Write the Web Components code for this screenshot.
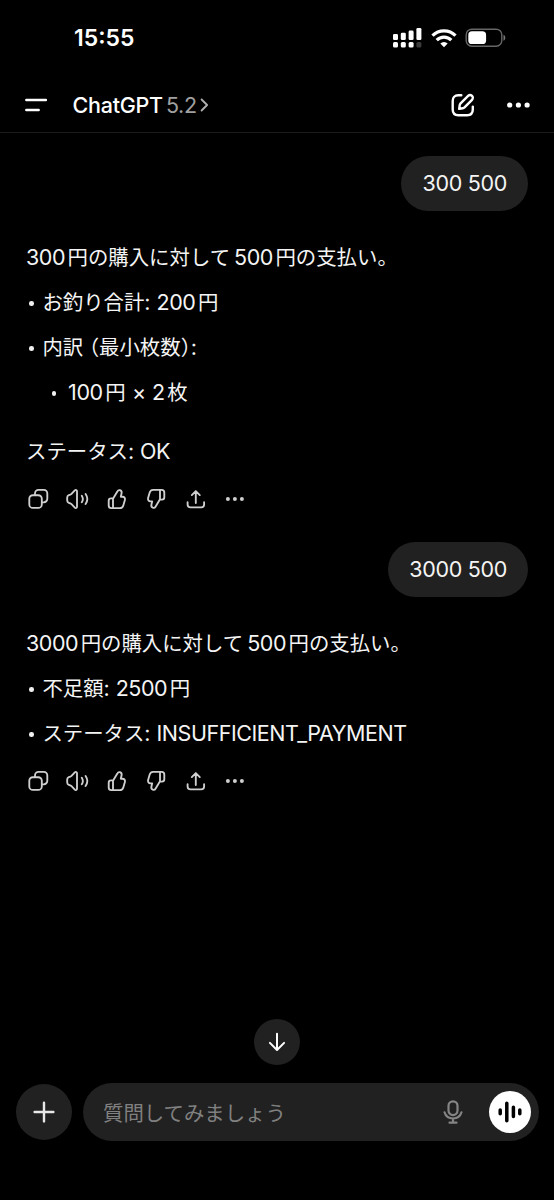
<!DOCTYPE html>
<html lang="ja">
<head>
<meta charset="utf-8">
<title>ChatGPT</title>
<style>
  html, body {
    margin: 0;
    background: #000;
  }

  body {
    height: 1200px;
    overflow: hidden;
    font-family: Inter, "Noto Sans CJK JP", sans-serif;
    color: #f4f4f4;
  }
</style>
</head>
<body>
<chat-screen>
  <status-bar slot="top" time="15:55"></status-bar>
  <nav-bar slot="top" name="ChatGPT" version="5.2"></nav-bar>

  <user-bubble>300 500</user-bubble>
  <assistant-message>
    <text-line>300円の購入に対して500円の支払い。</text-line>
    <text-line bullet>お釣り合計: 200円</text-line>
    <text-line bullet>内訳（最小枚数）:</text-line>
    <text-line bullet nested>100円 × 2枚</text-line>
    <text-line spaced>ステータス: OK</text-line>
  </assistant-message>

  <user-bubble>3000 500</user-bubble>
  <assistant-message>
    <text-line>3000円の購入に対して500円の支払い。</text-line>
    <text-line bullet>不足額: 2500円</text-line>
    <text-line bullet>ステータス: INSUFFICIENT_PAYMENT</text-line>
  </assistant-message>

  <scroll-button slot="bottom"></scroll-button>
  <chat-composer slot="bottom" placeholder="質問してみましょう"></chat-composer>
</chat-screen>

<script>
const ICONS = {
  copy: `<rect x="3.3" y="8.2" width="12.5" height="12.7" rx="3.5"/>
    <path d="M9 8V6.4a3.5 3.5 0 0 1 3.5-3.5h5.3a3.5 3.5 0 0 1 3.5 3.5v5.4a3.5 3.5 0 0 1-3.5 3.5H16"/>`,
  speaker: `<path d="M12 4.300v15.400c0 1.300-1.300 1.800-2.200.9l-3.300-3.500c-.4-.4-.8-.6-1.300-.8l-1.400-.5c-1.100-.4-1.600-1.200-1.600-2.300v-3c0-1.100.5-1.900 1.600-2.300l1.400-.5c.5-.2.900-.4 1.300-.8l3.300-3.500c.9-.9 2.200-.4 2.200.9z"/>
    <path d="M16.800 8.700c1.300 2 1.300 4.600 0 6.600M20.600 6.900c2.100 3.100 2.100 7.100 0 10.200"/>`,
  thumb: `<path d="M8 21.100V11.700l4.500-7.500c.5-.9 1.400-1.200 2.300-1 1.500.4 2.100 1.700 1.800 3l-.8 3.500h1.700c1.800 0 2.900 1.500 2.400 3.200l-1.600 5.500c-.5 1.700-1.700 2.700-3.500 2.700H6.300c-1.600 0-2.600-1-2.600-2.600v-4.700c0-1.500.9-2.400 2.400-2.400H8"/>`,
  share: `<path d="M11.800 16V4.200M7.800 8.100l4-4 4 4M3.600 15.200v2.300a2.900 2.900 0 0 0 2.900 2.900h10.700a2.900 2.900 0 0 0 2.900-2.900v-2.300"/>`,
  more: `<g fill="currentColor" stroke="none"><circle cx="4.900" cy="12" r="2"/><circle cx="11.900" cy="12" r="2"/><circle cx="18.900" cy="12" r="2"/></g>`,
};
ICONS.thumbDown = `<g transform="rotate(180 12 12)">${ICONS.thumb}</g>`;

const icon = (name) => `
  <svg width="24" height="24" viewBox="0 0 24 24" fill="none" stroke="currentColor"
    stroke-width="1.85" stroke-linecap="round" stroke-linejoin="round">${ICONS[name]}</svg>`;

class ChatScreen extends HTMLElement {
  constructor() {
    super();
    this.attachShadow({ mode: 'open' });
    this.shadowRoot.innerHTML = `
      <style>
        :host {
          display: flex;
          flex-direction: column;
          width: 554px;
          height: 1200px;
          background: #000;
        }

        main {
          flex: 1;
          min-height: 0;
          display: flex;
          flex-direction: column;
          padding: 23px 26px 0;
        }
      </style>
      <slot name="top"></slot>
      <main><slot></slot></main>
      <slot name="bottom"></slot>
    `;
  }
}

class StatusBar extends HTMLElement {
  connectedCallback() {
    this.attachShadow({ mode: 'open' });
    this.shadowRoot.innerHTML = `
      <style>
        :host {
          display: flex;
          align-items: center;
          justify-content: space-between;
          height: 76px;
          padding: 0 48px 0 74px;
          box-sizing: border-box;
          color: #fff;
        }

        .time {
          font-size: 23px;
          font-weight: 600;
        }

        .signals {
          display: flex;
          align-items: center;
          gap: 8.5px;
        }

        svg {
          display: block;
        }
      </style>
      <span class="time">${this.getAttribute('time')}</span>
      <div class="signals">
        <svg width="29" height="22" viewBox="0 0 29 22" fill="#fff">
          <rect x="0" y="7" width="5" height="6" rx="1.3"/>
          <rect x="7.8" y="5.7" width="5" height="7.3" rx="1.3"/>
          <rect x="15.6" y="3.6" width="5" height="9.4" rx="1.3"/>
          <rect x="23.4" y="1" width="5" height="12" rx="1.3"/>
          <rect x="0" y="15" width="5" height="5.6" rx="1.5"/>
          <rect x="7.8" y="15" width="5" height="5.6" rx="1.5"/>
          <rect x="15.6" y="15" width="5" height="5.6" rx="1.5"/>
          <rect x="23.4" y="15" width="5" height="5.6" rx="1.5" fill="#3c3c3c"/>
        </svg>
        <svg width="26" height="20" viewBox="0 0 26 20" fill="none" stroke="#fff" stroke-width="3.2">
          <path d="M1.5 7.700a16.200 16.200 0 0 1 23 0"/>
          <path d="M5.700 12.100a10.300 10.300 0 0 1 14.600 0"/>
          <path d="M13 19.300l-3.700-3.900a5.300 5.300 0 0 1 7.400 0z" fill="#fff" stroke="none"/>
        </svg>
        <svg width="41" height="20" viewBox="0 0 41 20">
          <rect x="1.2" y="1.2" width="35.6" height="17" rx="5.6" fill="none" stroke="#666" stroke-width="1.4"/>
          <rect x="3.3" y="3.3" width="17.8" height="12.8" rx="3.7" fill="#fff"/>
          <path d="M38.500 6.700c2.400 1 2.400 5 0 6z" fill="#777"/>
        </svg>
      </div>
    `;
  }
}

class NavBar extends HTMLElement {
  connectedCallback() {
    this.attachShadow({ mode: 'open' });
    this.shadowRoot.innerHTML = `
      <style>
        :host {
          display: flex;
          align-items: center;
          height: 57px;
          padding: 1px 24.5px 0 24.5px;
          box-sizing: border-box;
          border-bottom: 1px solid #1c1c1c;
          color: #fff;
        }

        svg {
          display: block;
        }

        .title {
          display: flex;
          align-items: center;
          flex: 1;
          margin-left: 25px;
          font-size: 21.5px;
        }

        .name {
          font-weight: 500;
          letter-spacing: -0.25px;
        }

        .version {
          margin-left: 3px;
          color: #a0a0a0;
          letter-spacing: -0.3px;
        }

        .title svg {
          margin-left: 3.5px;
        }

        .compose {
          margin-right: 32px;
        }
      </style>
      <svg width="23" height="14" viewBox="0 0 23 14" stroke="#fff" stroke-width="2.4" stroke-linecap="round">
        <path d="M1.300 2h19.600M1.300 12h12.400"/>
      </svg>
      <div class="title">
        <span class="name">${this.getAttribute('name')}</span>
        <span class="version">${this.getAttribute('version')}</span>
        <svg width="9" height="14" viewBox="0 0 9 14" fill="none" stroke="#b0b0b0" stroke-width="1.8"
          stroke-linecap="round" stroke-linejoin="round"><path d="M1.600 1.500L7.100 7l-5.500 5.500"/></svg>
      </div>
      <svg class="compose" width="24" height="24" viewBox="0 0 24 24" fill="none" stroke="#fff"
        stroke-width="2.4" stroke-linecap="round" stroke-linejoin="round">
        <path d="M10.300 2.300H7.300c-3.600 0-5.600 2-5.600 5.600v8.700c0 3.600 2 5.600 5.600 5.600h8.900c3.600 0 5.600-2 5.600-5.600v-3"/>
        <path d="M8.200 15.900l.5-3.700c.1-.7.4-1.300.9-1.800l7.500-7.500a2.700 2.700 0 0 1 3.900 3.900l-7.500 7.500c-.5.5-1.100.8-1.800.9z"/>
      </svg>
      <svg width="23" height="6" viewBox="0 0 23 6" fill="#fff">
        <circle cx="2.7" cy="3" r="2.6"/><circle cx="11.4" cy="3" r="2.6"/><circle cx="20.1" cy="3" r="2.6"/>
      </svg>
    `;
  }
}

class UserBubble extends HTMLElement {
  constructor() {
    super();
    this.attachShadow({ mode: 'open' });
    this.shadowRoot.innerHTML = `
      <style>
        :host {
          display: block;
          align-self: flex-end;
          height: 55px;
          padding: 0 21px;
          border-radius: 27.5px;
          background: #212121;
          font-size: 21.5px;
          line-height: 55px;
          letter-spacing: -0.3px;
          white-space: nowrap;
        }
      </style>
      <slot></slot>
    `;
  }
}

// One line of an answer. Latin runs are set a little larger than the kana and kanji,
// and full-width brackets lose the blank half of their box.
class TextLine extends HTMLElement {
  connectedCallback() {
    const kind = (run) => {
      if (run === '（') return 'open';
      if (run === '）') return 'close';
      if (run[0] === ':') return 'latin colon';
      return /^[\x20-\x7e×]/.test(run) ? 'latin' : 'cjk';
    };
    const runs = this.textContent
      .split(/([\x20-\x7e×]+|[（）])/)
      .filter(Boolean)
      .map((run) => `<span class="${kind(run)}">${run}</span>`)
      .join('');

    this.attachShadow({ mode: 'open' });
    this.shadowRoot.innerHTML = `
      <style>
        :host {
          display: flex;
          align-items: center;
          height: 45px;
          white-space: pre;
        }

        :host([bullet]) {
          padding-left: 3px;
        }

        :host([nested]) {
          padding-left: 25.5px;
        }

        :host([spaced]) {
          margin-top: 14px;
        }

        .dot {
          display: none;
          width: 4.6px;
          height: 4.6px;
          margin: 3px 8.8px 0 0;
          border-radius: 50%;
          background: #f0f0f0;
        }

        :host([bullet]) .dot {
          display: block;
        }

        :host([nested]) .dot {
          margin-right: 12px;
        }

        .text {
          padding-top: 2px;
          line-height: 45px;
        }

        .latin {
          font-size: 21.5px;
          letter-spacing: -0.45px;
          word-spacing: 0.8px;
        }

        .cjk, .open, .close {
          font-size: 20.4px;
        }

        .open, .close {
          font-feature-settings: "halt";
        }

        .open {
          margin-left: 5.7px;
        }

        .latin + .cjk {
          margin-left: 2.5px;
        }

        .cjk + .latin:not(.colon) {
          margin-left: 4px;
        }

        :host([nested]) .cjk + .latin {
          margin-left: 0;
        }
      </style>
      <span class="dot"></span>
      <span class="text">${runs}</span>
    `;
  }
}

class AssistantMessage extends HTMLElement {
  constructor() {
    super();
    this.attachShadow({ mode: 'open' });
    this.shadowRoot.innerHTML = `
      <style>
        :host {
          display: block;
          padding: 23.5px 0 31px;
        }

        .lines {
          display: flex;
          flex-direction: column;
        }

        .actions {
          display: flex;
          gap: 15.5px;
          margin: 13.5px 0 0 -0.5px;
          color: #cfcfcf;
        }
      </style>
      <div class="lines"><slot></slot></div>
      <div class="actions">
        ${['copy', 'speaker', 'thumb', 'thumbDown', 'share', 'more'].map(icon).join('')}
      </div>
    `;
  }
}

class ScrollButton extends HTMLElement {
  constructor() {
    super();
    this.attachShadow({ mode: 'open' });
    this.shadowRoot.innerHTML = `
      <style>
        :host {
          display: flex;
          align-items: center;
          justify-content: center;
          align-self: center;
          width: 46px;
          height: 46px;
          margin-bottom: 18px;
          border-radius: 50%;
          background: #212121;
        }
      </style>
      <svg width="20" height="20" viewBox="0 0 20 20" fill="none" stroke="#fff" stroke-width="2"
        stroke-linecap="round" stroke-linejoin="round">
        <path d="M10 1.800v16M2.900 10.900l7.100 7.100 7.100-7.100"/>
      </svg>
    `;
  }
}

class ChatComposer extends HTMLElement {
  connectedCallback() {
    this.attachShadow({ mode: 'open' });
    this.shadowRoot.innerHTML = `
      <style>
        :host {
          display: flex;
          align-items: center;
          gap: 10.5px;
          height: 58px;
          padding: 0 15.5px 59px;
        }

        .add, .voice {
          display: flex;
          align-items: center;
          justify-content: center;
          border-radius: 50%;
        }

        .add {
          width: 56.5px;
          height: 56.5px;
          background: #212121;
        }

        .field {
          flex: 1;
          display: flex;
          align-items: center;
          height: 58px;
          padding: 0 7.5px 0 20.5px;
          box-sizing: border-box;
          border-radius: 29px;
          background: #212121;
        }

        .placeholder {
          flex: 1;
          font-size: 20.4px;
          color: #808080;
        }

        .voice {
          width: 42px;
          height: 42px;
          margin-left: 26px;
          background: #fff;
        }
      </style>
      <div class="add">
        <svg width="22" height="22" viewBox="0 0 22 22" stroke="#e8e8e8" stroke-width="2.4" stroke-linecap="round">
          <path d="M11 1.600v18.800M1.600 11h18.800"/>
        </svg>
      </div>
      <div class="field">
        <span class="placeholder">${this.getAttribute('placeholder')}</span>
        <svg width="20" height="24" viewBox="0 0 20 24" fill="none" stroke="#848484" stroke-width="2.2" stroke-linecap="round">
          <rect x="5.500" y="1.300" width="9" height="13.800" rx="4.500"/>
          <path d="M1.500 12.300c1.200 4 4.500 6.200 8.500 6.200s7.300-2.200 8.500-6.200M10 18.500v4M6.500 22.700h7"/>
        </svg>
        <div class="voice">
          <svg width="24" height="22" viewBox="0 0 24 22" stroke="#000" stroke-width="3.5" stroke-linecap="round">
            <path d="M2.200 9v3.800M8.800 2.300v17.400M15.400 6.300v9.300M21.800 9v3.800"/>
          </svg>
        </div>
      </div>
    `;
  }
}

customElements.define('chat-screen', ChatScreen);
customElements.define('status-bar', StatusBar);
customElements.define('nav-bar', NavBar);
customElements.define('user-bubble', UserBubble);
customElements.define('text-line', TextLine);
customElements.define('assistant-message', AssistantMessage);
customElements.define('scroll-button', ScrollButton);
customElements.define('chat-composer', ChatComposer);
</script>
</body>
</html>
